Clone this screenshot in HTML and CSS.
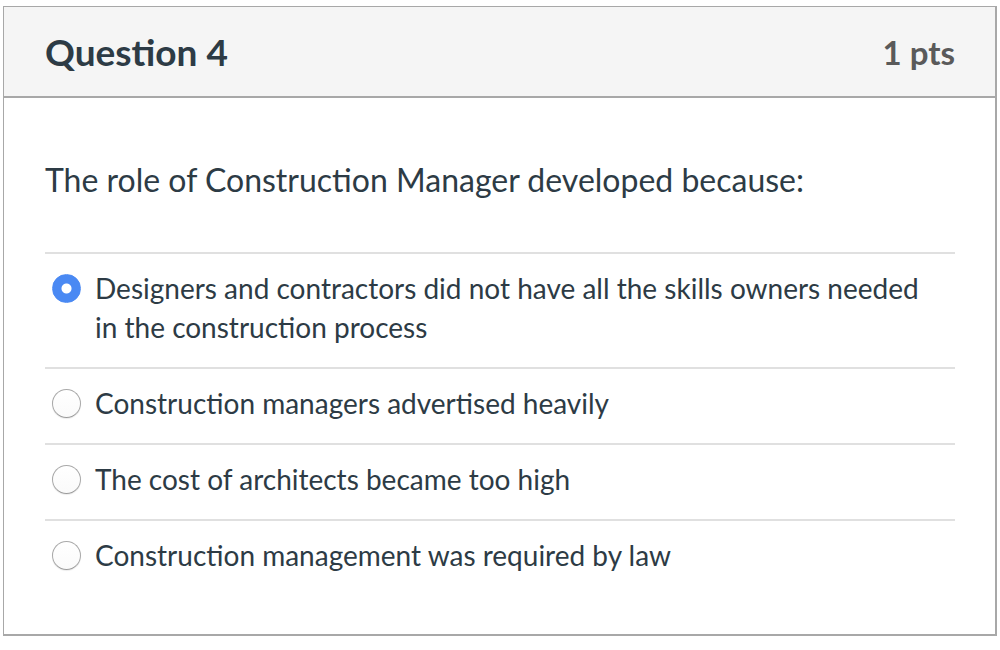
FILE: index.html
```html
<!DOCTYPE html>
<html>
<head>
<meta charset="utf-8">
<link rel="stylesheet" href="styles.css">
</head>
<body>
<div class="quiz">
  <div class="quiz-header">
    <h2 class="quiz-title">Question 4</h2>
    <div class="quiz-points">1 pts</div>
  </div>
  <div class="quiz-body">
    <p class="quiz-question">The role of Construction Manager developed because:</p>
    <div class="answers">
      <label class="answer">
        <span class="radio radio-checked"></span>
        <span class="answer-text">Designers and contractors did not have all the skills owners needed in the construction process</span>
      </label>
      <label class="answer">
        <span class="radio"></span>
        <span class="answer-text">Construction managers advertised heavily</span>
      </label>
      <label class="answer">
        <span class="radio"></span>
        <span class="answer-text">The cost of architects became too high</span>
      </label>
      <label class="answer">
        <span class="radio"></span>
        <span class="answer-text">Construction management was required by law</span>
      </label>
    </div>
  </div>
</div>
</body>
</html>
```

FILE: styles.css
```css
html, body {
  margin: 0;
  padding: 0;
  background: #ffffff;
}

body {
  font-family: Lato, "Open Sans", sans-serif;
  color: #2d3b45;
  padding: 6px 3px 0 3px;
}

.quiz {
  width: 991px;
  border-style: solid;
  border-color: #a8a8a8;
  border-width: 1px 2px 2px 1px;
}

.quiz-header {
  display: flex;
  justify-content: space-between;
  align-items: center;
  height: 89px;
  padding: 0 40px 0 41px;
  background: #f5f5f5;
  border-bottom: 2px solid #a8a8a8;
}

.quiz-title {
  margin: 0;
  font-size: 37px;
  font-weight: 700;
  color: #2d3b45;
  line-height: 40px;
}

.quiz-points {
  font-size: 33px;
  font-weight: 700;
  color: #5a5a5a;
  line-height: 40px;
}

.quiz-body {
  padding: 62px 40px 39px 41px;
}

.quiz-question {
  margin: 0 0 52px 0;
  font-size: 32px;
  line-height: 40px;
}

.answers {
  display: flex;
  flex-direction: column;
}

.answer {
  display: flex;
  align-items: flex-start;
  gap: 14px;
  padding: 15px 24px 20px 7px;
  border-top: 2px solid #e0e0e0;
  font-size: 28px;
  line-height: 39px;
}

.radio {
  flex: none;
  width: 27px;
  height: 27px;
  margin-top: 5px;
  border-radius: 50%;
  border: 1px solid #a9a9a9;
  border-bottom-color: #9a9a9a;
  background: linear-gradient(#ffffff, #fafafa);
  box-shadow: 0 1px 1px rgba(0,0,0,0.08);
}

.radio-checked {
  border-color: #4a89f3;
  background: radial-gradient(circle, #ffffff 0 4.5px, #4a89f3 5.5px);
  box-shadow: none;
}

.answer-text {
  flex: 1;
}
```
